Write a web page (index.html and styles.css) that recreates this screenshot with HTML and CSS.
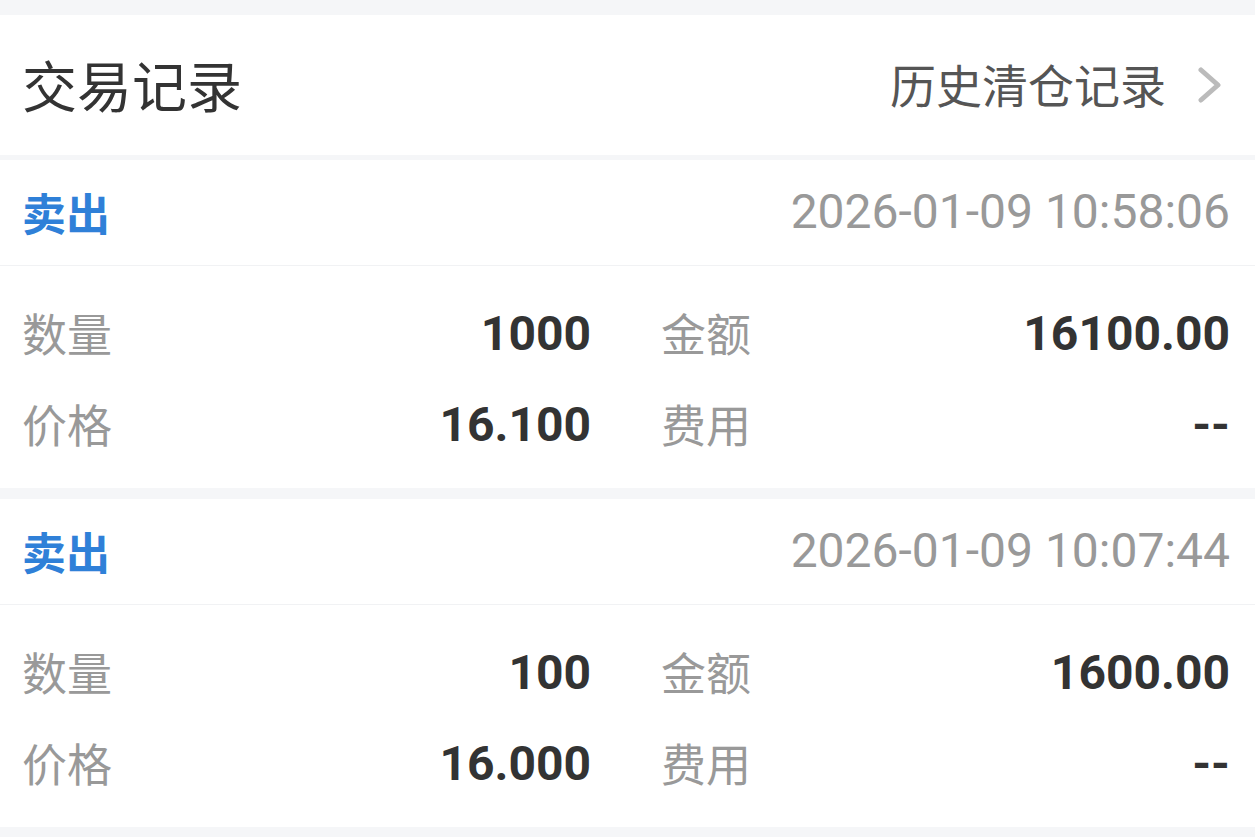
FILE: index.html
```html
<!DOCTYPE html>
<html lang="zh-CN">
<head>
<meta charset="utf-8">
<title>交易记录</title>
<link rel="stylesheet" href="styles.css">
</head>
<body>
<div class="page">
  <header class="header">
    <h1 class="title">交易记录</h1>
    <a class="history-link">
      <span>历史清仓记录</span>
      <svg class="chevron" width="24" height="36" viewBox="0 0 24 36">
        <polyline points="3,3 20,18 3,33" fill="none" stroke="#bbbbbb" stroke-width="5" stroke-linecap="round" stroke-linejoin="round"/>
      </svg>
    </a>
  </header>

  <section class="card">
    <div class="card-head">
      <span class="trade-type">卖出</span>
      <span class="trade-time">2026-01-09 10:58:06</span>
    </div>
    <div class="card-body">
      <div class="cell"><span class="label">数量</span><span class="value">1000</span></div>
      <div class="cell"><span class="label">金额</span><span class="value">16100.00</span></div>
      <div class="cell"><span class="label">价格</span><span class="value">16.100</span></div>
      <div class="cell"><span class="label">费用</span><span class="value">--</span></div>
    </div>
  </section>

  <section class="card">
    <div class="card-head">
      <span class="trade-type">卖出</span>
      <span class="trade-time">2026-01-09 10:07:44</span>
    </div>
    <div class="card-body">
      <div class="cell"><span class="label">数量</span><span class="value">100</span></div>
      <div class="cell"><span class="label">金额</span><span class="value">1600.00</span></div>
      <div class="cell"><span class="label">价格</span><span class="value">16.000</span></div>
      <div class="cell"><span class="label">费用</span><span class="value">--</span></div>
    </div>
  </section>
</div>
</body>
</html>
```

FILE: styles.css
```css
* {
  box-sizing: border-box;
}

html, body {
  margin: 0;
  padding: 0;
}

body {
  background: #f5f6f8;
  font-family: Roboto, "Noto Sans CJK SC", sans-serif;
  color: #333333;
}

.page {
  padding-top: 15px;
}

.header {
  height: 140px;
  background: #ffffff;
  display: flex;
  align-items: center;
  justify-content: space-between;
  padding: 0 33px 4px 22px;
}

.title {
  margin: 0;
  font-family: "Noto Sans CJK SC", sans-serif;
  font-size: 55px;
  font-weight: 400;
  line-height: 1;
  color: #333333;
}

.history-link {
  display: flex;
  align-items: center;
  gap: 32px;
  font-family: "Noto Sans CJK SC", sans-serif;
  font-size: 46px;
  line-height: 1;
  color: #555555;
}

.chevron {
  display: block;
  margin-top: 4px;
}

.card {
  background: #ffffff;
  margin-top: 5px;
}

.card + .card {
  margin-top: 11px;
}

.card-head {
  height: 106px;
  display: flex;
  align-items: center;
  justify-content: space-between;
  padding: 0 25px 1px 22px;
  border-bottom: 1px solid #f1f2f4;
}

.trade-type {
  font-family: "Noto Sans CJK SC", sans-serif;
  font-size: 44px;
  font-weight: 700;
  line-height: 1;
  color: #2f80d8;
}

.trade-time {
  font-size: 48px;
  line-height: 1;
  color: #999999;
}

.card-body {
  display: grid;
  grid-template-columns: 1fr 1fr;
  grid-auto-rows: 91px;
  column-gap: 70px;
  padding: 22px 25px 18px 22px;
}

.cell {
  display: flex;
  align-items: center;
  justify-content: space-between;
}

.label {
  font-family: "Noto Sans CJK SC", sans-serif;
  font-size: 45px;
  line-height: 1;
  color: #999999;
  margin-bottom: 3px;
}

.value {
  font-size: 48px;
  font-weight: 700;
  line-height: 1;
  color: #333333;
}
```
